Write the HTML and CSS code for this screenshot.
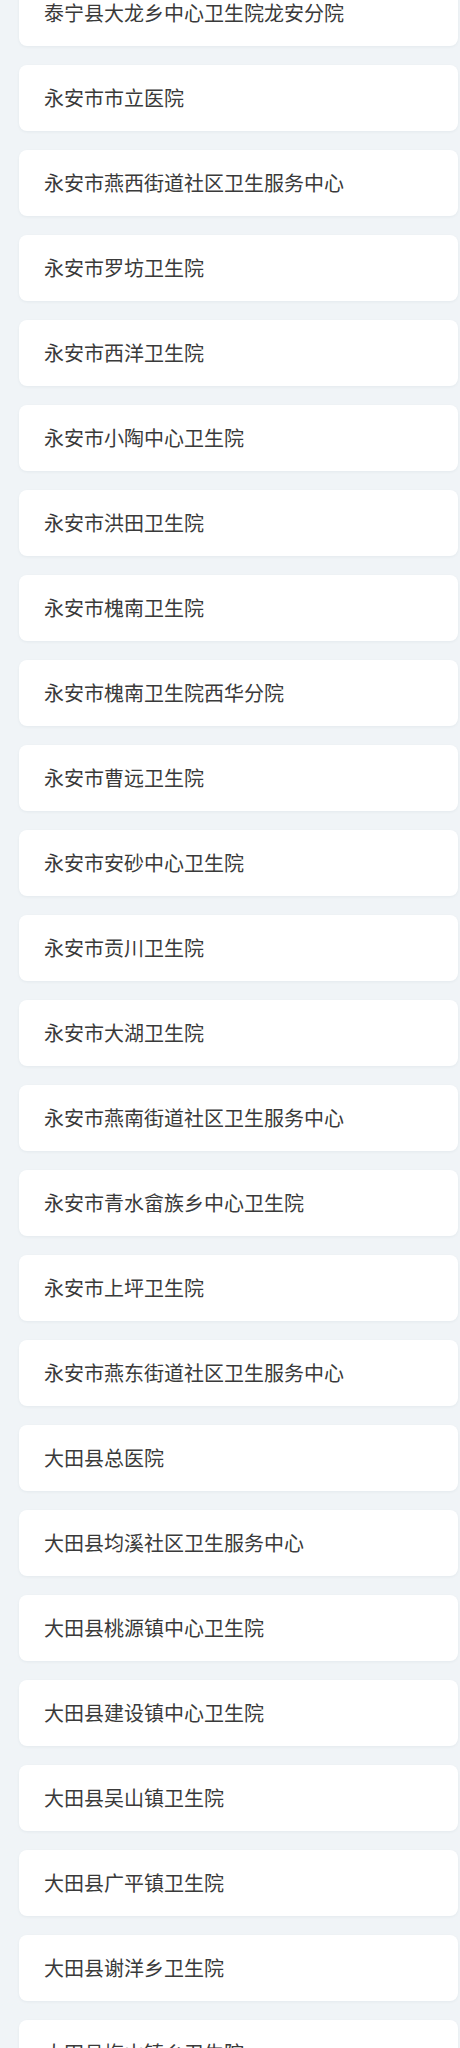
FILE: index.html
```html
<!DOCTYPE html>
<html lang="zh-CN">
<head>
<meta charset="utf-8">
<title>医院列表</title>
<link rel="stylesheet" href="styles.css">
</head>
<body>
<ul class="list">
<li class="card">泰宁县大龙乡中心卫生院龙安分院</li>
<li class="card">永安市市立医院</li>
<li class="card">永安市燕西街道社区卫生服务中心</li>
<li class="card">永安市罗坊卫生院</li>
<li class="card">永安市西洋卫生院</li>
<li class="card">永安市小陶中心卫生院</li>
<li class="card">永安市洪田卫生院</li>
<li class="card">永安市槐南卫生院</li>
<li class="card">永安市槐南卫生院西华分院</li>
<li class="card">永安市曹远卫生院</li>
<li class="card">永安市安砂中心卫生院</li>
<li class="card">永安市贡川卫生院</li>
<li class="card">永安市大湖卫生院</li>
<li class="card">永安市燕南街道社区卫生服务中心</li>
<li class="card">永安市青水畲族乡中心卫生院</li>
<li class="card">永安市上坪卫生院</li>
<li class="card">永安市燕东街道社区卫生服务中心</li>
<li class="card">大田县总医院</li>
<li class="card">大田县均溪社区卫生服务中心</li>
<li class="card">大田县桃源镇中心卫生院</li>
<li class="card">大田县建设镇中心卫生院</li>
<li class="card">大田县吴山镇卫生院</li>
<li class="card">大田县广平镇卫生院</li>
<li class="card">大田县谢洋乡卫生院</li>
<li class="card">大田县梅山镇乡卫生院</li>
</ul>
</body>
</html>
```
FILE: styles.css
```css
html, body {
  margin: 0;
  padding: 0;
  background: #f0f4f7;
}
body {
  font-family: "Noto Sans CJK SC", "Noto Sans", sans-serif;
  overflow: hidden;
}
.list {
  list-style: none;
  margin: -20px 2px 0 19px;
  padding: 0;
  display: flex;
  flex-direction: column;
  gap: 19px;
}
.card {
  height: 66px;
  box-sizing: border-box;
  padding: 0 25px;
  display: flex;
  align-items: center;
  background: #ffffff;
  border-radius: 8px;
  box-shadow: 0 1px 3px rgba(40, 60, 80, 0.06);
  color: #3a3a3a;
  font-size: 20px;
  font-weight: 400;
  line-height: 26px;
  white-space: nowrap;
}
```
